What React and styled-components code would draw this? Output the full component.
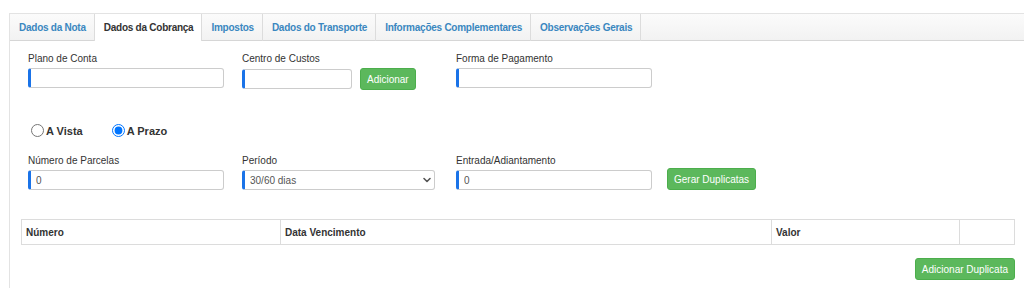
import styled, { createGlobalStyle } from "styled-components";

const GlobalStyle = createGlobalStyle`
  html, body {
    margin: 0;
    padding: 0;
    background: #fff;
    overflow: hidden;
  }
  body {
    font-family: "Liberation Sans", Arial, sans-serif;
    font-size: 10px;
    color: #333;
  }
`;

const tabs = [
  "Dados da Nota",
  "Dados da Cobrança",
  "Impostos",
  "Dados do Transporte",
  "Informações Complementares",
  "Observações Gerais",
];

const App = () => {
  return (
    <>
      <GlobalStyle />
      <Panel>
        <TabBar>
          {tabs.map((t) => (
            <Tab key={t} $active={t === "Dados da Cobrança"}>
              {t}
            </Tab>
          ))}
        </TabBar>
        <Content>
          <FormGrid>
            <Field>
              <Label>Plano de Conta</Label>
              <Input />
            </Field>
            <Field>
              <Label>Centro de Custos</Label>
              <InlineRow>
                <Input $width="110px" />
                <Button>Adicionar</Button>
              </InlineRow>
            </Field>
            <Field>
              <Label>Forma de Pagamento</Label>
              <Input />
            </Field>
          </FormGrid>

          <RadioRow>
            <RadioLabel>
              <Radio type="radio" name="pag" />
              A Vista
            </RadioLabel>
            <RadioLabel>
              <Radio type="radio" name="pag" defaultChecked />
              A Prazo
            </RadioLabel>
          </RadioRow>

          <FormGrid>
            <Field>
              <Label>Número de Parcelas</Label>
              <Input defaultValue="0" />
            </Field>
            <Field>
              <Label>Período</Label>
              <SelectWrap>
                <Select defaultValue="30/60 dias">
                  <option>30/60 dias</option>
                </Select>
                <Chevron width="10" height="10" viewBox="0 0 10 10">
                  <path d="M2 3.5 L5 6.5 L8 3.5" fill="none" stroke="#555" strokeWidth="1.6" strokeLinecap="round" strokeLinejoin="round" />
                </Chevron>
              </SelectWrap>
            </Field>
            <Field>
              <Label>Entrada/Adiantamento</Label>
              <Input defaultValue="0" />
            </Field>
            <ButtonCell>
              <Button>Gerar Duplicatas</Button>
            </ButtonCell>
          </FormGrid>

          <Table>
            <thead>
              <tr>
                <Th style={{ width: 259 }}>Número</Th>
                <Th style={{ width: 491 }}>Data Vencimento</Th>
                <Th style={{ width: 188 }}>Valor</Th>
                <Th></Th>
              </tr>
            </thead>
          </Table>

          <Footer>
            <Button>Adicionar Duplicata</Button>
          </Footer>
        </Content>
      </Panel>
    </>
  );
};

export default App;

const Panel = styled.div`
  margin: 13px 0 0 9px;
  height: 274px;
  border-left: 1px solid #e3e3e3;
  border-top: 1px solid #e3e3e3;
`;

const TabBar = styled.div`
  display: flex;
  height: 26px;
  background: linear-gradient(#fbfbfb, #f2f2f2);
  border-bottom: 1px solid #d6d6d6;
`;

const Tab = styled.div`
  display: flex;
  align-items: center;
  padding: 0 8px 0 9px;
  height: 27px;
  box-sizing: border-box;
  border-right: 1px solid #dcdcdc;
  font-weight: bold;
  font-size: 10px;
  letter-spacing: -0.25px;
  color: ${(p) => (p.$active ? "#333" : "#3a87c0")};
  background: ${(p) => (p.$active ? "#fff" : "transparent")};
  position: relative;
  z-index: 1;
`;

const Content = styled.div`
  padding: 11px 10px 0 11px;
`;

const FormGrid = styled.div`
  display: grid;
  grid-template-columns: 196px 196px 196px 100px;
  column-gap: 18px;
  padding-left: 7px;
`;

const Field = styled.div`
  display: flex;
  flex-direction: column;
`;

const Label = styled.label`
  font-size: 10px;
  line-height: 13px;
  color: #333;
  margin-bottom: 3px;
`;

const InlineRow = styled.div`
  display: flex;
  align-items: center;
  gap: 8px;
`;

const Input = styled.input`
  box-sizing: border-box;
  width: ${(p) => p.$width || "100%"};
  height: 20px;
  border: 1px solid #ccc;
  border-left: 3px solid #1a73e8;
  border-radius: 3px;
  padding: 0 5px;
  font-family: "Liberation Sans", Arial, sans-serif;
  font-size: 10px;
  color: #555;
  outline: none;
`;

const SelectWrap = styled.div`
  position: relative;
  width: 193px;
`;

const Select = styled.select`
  box-sizing: border-box;
  width: 100%;
  height: 20px;
  border: 1px solid #ccc;
  border-left: 3px solid #1a73e8;
  border-radius: 3px;
  padding: 0 5px;
  font-family: "Liberation Sans", Arial, sans-serif;
  font-size: 10px;
  color: #555;
  background: #fff;
  appearance: none;
  outline: none;
`;

const Chevron = styled.svg`
  position: absolute;
  right: 3px;
  top: 5px;
  pointer-events: none;
`;

const ButtonCell = styled.div`
  display: flex;
  align-items: flex-end;
  margin-left: -3px;
`;

const Button = styled.button`
  height: 22px;
  padding: 0 6px;
  background: #5cb85c;
  border: 1px solid #4cae4c;
  border-radius: 3px;
  color: #fff;
  font-family: "Liberation Sans", Arial, sans-serif;
  font-size: 10px;
  white-space: nowrap;
`;

const RadioRow = styled.div`
  display: flex;
  gap: 29px;
  margin: 34px 0 17px 10px;
`;

const RadioLabel = styled.label`
  display: flex;
  align-items: center;
  font-weight: bold;
  font-size: 11px;
  color: #333;
`;

const Radio = styled.input`
  width: 13px;
  height: 13px;
  margin: 0 2px 0 0;
`;

const Table = styled.table`
  margin-top: 29px;
  width: 994px;
  border-collapse: collapse;
`;

const Th = styled.th`
  height: 25px;
  padding: 0 4px;
  border: 1px solid #dcdcdc;
  text-align: left;
  font-size: 10px;
  font-weight: bold;
  color: #333;
  box-sizing: border-box;
`;

const Footer = styled.div`
  display: flex;
  justify-content: flex-end;
  width: 994px;
  margin-top: 13px;
`;
